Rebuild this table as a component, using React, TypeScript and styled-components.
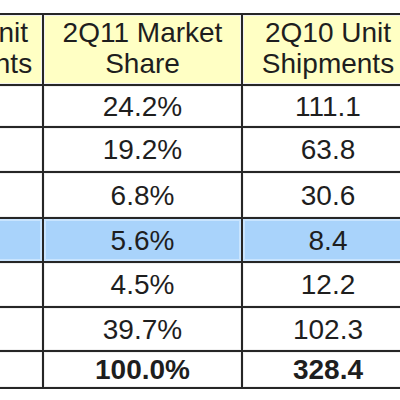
import React from "react";
import styled, { createGlobalStyle } from "styled-components";

const Global = createGlobalStyle`
  html, body { margin: 0; padding: 0; background: #ffffff; }
  body { font-family: "Liberation Sans", Arial, sans-serif; }
`;

const Viewport = styled.div`
  width: 400px;
  height: 400px;
  overflow: hidden;
  background: #ffffff;
  padding-top: 13px;
  box-sizing: border-box;
`;

const Table = styled.div`
  display: grid;
  grid-template-columns: 152px 197px 170px;
  grid-template-rows: 69px 40px 43px 44px 42px 43px 42px 35px;
  gap: 2px;
  padding: 2px;
  width: max-content;
  margin-left: -112px;
  background: #262626;
`;

const Cell = styled.div<{ $tone?: "head" | "hi" | "plain"; $bold?: boolean }>`
  display: flex;
  align-items: center;
  justify-content: center;
  text-align: center;
  white-space: nowrap;
  font-size: 28px;
  line-height: ${(p) => (p.$tone === "head" ? "31px" : "31px")};
  padding-bottom: ${(p) => (p.$tone === "head" ? "4px" : "0")};
  box-sizing: border-box;
  color: #1e1e1e;
  font-weight: ${(p) => (p.$bold ? 700 : 400)};
  background: ${(p) =>
    p.$tone === "head" ? "#ffffc4" : p.$tone === "hi" ? "#a9d3fb" : "#ffffff"};
  box-shadow: ${(p) =>
    p.$tone === "hi" ? "inset 0 0 0 2px #c9e4fe" : "inset 0 0 0 1px #f0f0f0"};
`;

const rows: { share: string; prev: string; hi?: boolean; bold?: boolean }[] = [
  { share: "24.2%", prev: "111.1" },
  { share: "19.2%", prev: "63.8" },
  { share: "6.8%", prev: "30.6" },
  { share: "5.6%", prev: "8.4", hi: true },
  { share: "4.5%", prev: "12.2" },
  { share: "39.7%", prev: "102.3" },
  { share: "100.0%", prev: "328.4", bold: true },
];

export default function App() {
  return (
    <>
      <Global />
      <Viewport>
        <Table>
          <Cell $tone="head">
            2Q11 Unit
            <br />
            Shipments
          </Cell>
          <Cell $tone="head">
            2Q11 Market
            <br />
            Share
          </Cell>
          <Cell $tone="head">
            2Q10 Unit
            <br />
            Shipments
          </Cell>
          {rows.map((r, i) => {
            const tone = r.hi ? "hi" : "plain";
            return (
              <React.Fragment key={i}>
                <Cell $tone={tone} $bold={r.bold} />
                <Cell $tone={tone} $bold={r.bold}>
                  {r.share}
                </Cell>
                <Cell $tone={tone} $bold={r.bold}>
                  {r.prev}
                </Cell>
              </React.Fragment>
            );
          })}
        </Table>
      </Viewport>
    </>
  );
}
